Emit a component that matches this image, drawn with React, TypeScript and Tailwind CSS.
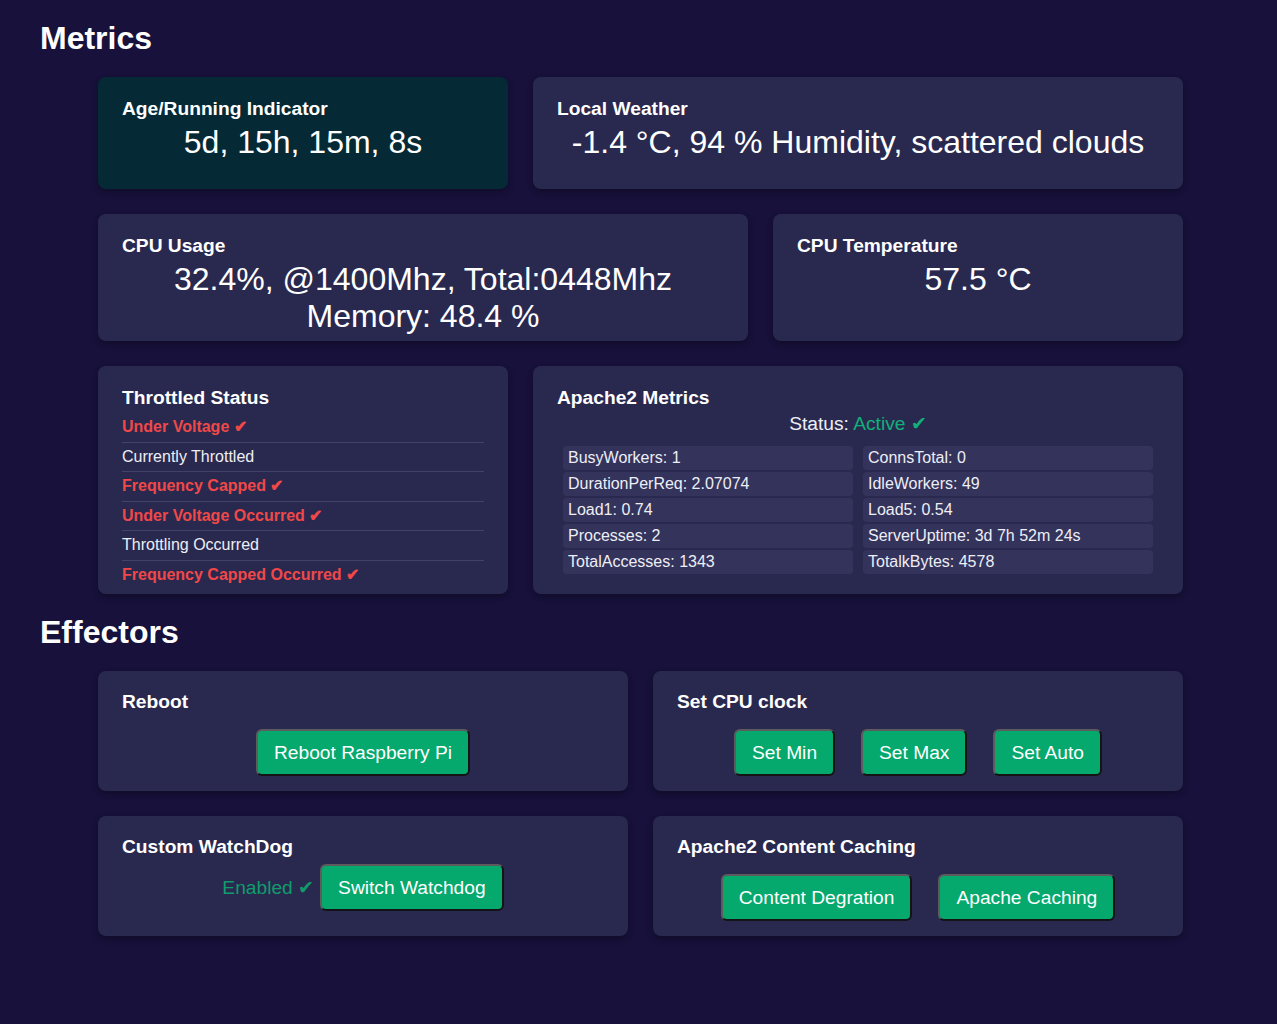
import { ReactNode } from 'react';

const card = 'rounded-lg bg-[#29294f] px-6 shadow-[0_3px_6px_rgba(0,0,0,0.3)]';
const title = 'text-[19.2px] font-bold leading-[22px] text-white mb-[4px]';
const bigValue = 'text-center text-[32px] leading-[37px] text-white';
const btn =
  'rounded-md border-2 border-t-[#5c5c5c] border-l-[#5c5c5c] border-b-[#141414] border-r-[#141414] bg-[#05a86d] px-4 py-[10.5px] text-[19.2px] leading-[22px] text-white';

const throttled = [
  { label: 'Under Voltage', on: true },
  { label: 'Currently Throttled', on: false },
  { label: 'Frequency Capped', on: true },
  { label: 'Under Voltage Occurred', on: true },
  { label: 'Throttling Occurred', on: false },
  { label: 'Frequency Capped Occurred', on: true },
];

const apache = [
  ['BusyWorkers: 1', 'ConnsTotal: 0'],
  ['DurationPerReq: 2.07074', 'IdleWorkers: 49'],
  ['Load1: 0.74', 'Load5: 0.54'],
  ['Processes: 2', 'ServerUptime: 3d 7h 52m 24s'],
  ['TotalAccesses: 1343', 'TotalkBytes: 4578'],
];

function Card({ heading, className, children }: { heading: string; className?: string; children: ReactNode }) {
  return (
    <div className={`${card} ${className ?? ''}`}>
      <h3 className={title}>{heading}</h3>
      {children}
    </div>
  );
}

export default function App() {
  return (
    <div className="min-h-screen bg-[#17113b] pt-5 pb-10 font-['Liberation_Sans',Arial,sans-serif] text-white">
      <h1 className="px-10 text-[32px] font-bold leading-[37px]">Metrics</h1>

      <div className="mt-5 ml-[98px] flex w-[1085px] flex-col gap-[25px]">
        <div className="flex gap-[25px]">
          <Card heading="Age/Running Indicator" className="min-h-[112px] w-[410px] pt-[21px] !bg-[#052a35]">
            <p className={bigValue}>5d, 15h, 15m, 8s</p>
          </Card>
          <Card heading="Local Weather" className="min-h-[112px] w-[650px] pt-[21px]">
            <p className={bigValue}>-1.4 °C, 94 % Humidity, scattered clouds</p>
          </Card>
        </div>

        <div className="flex gap-[25px]">
          <Card heading="CPU Usage" className="w-[650px] pt-[21px] pb-[6px]">
            <p className={bigValue}>32.4%, @1400Mhz, Total:0448Mhz</p>
            <p className={bigValue}>Memory: 48.4 %</p>
          </Card>
          <Card heading="CPU Temperature" className="w-[410px] pt-[21px]">
            <p className={bigValue}>57.5 °C</p>
          </Card>
        </div>

        <div className="flex gap-[25px]">
          <Card heading="Throttled Status" className="w-[410px] pt-[21px]">
            <ul className="mt-[2px]">
              {throttled.map((t, i) => (
                <li
                  key={t.label}
                  className={`py-[5px] text-[16px] leading-[18.6px] ${i < throttled.length - 1 ? 'border-b border-[#41416a]' : ''} ${
                    t.on ? 'font-bold text-[#f04848]' : 'text-[#eeeef5]'
                  }`}
                >
                  {t.label}
                  {t.on && ' ✔'}
                </li>
              ))}
            </ul>
          </Card>
          <Card heading="Apache2 Metrics" className="w-[650px] pt-[21px] pb-5">
            <p className="mt-[4px] text-center text-[19.2px] leading-[22px] text-[#eeeef5]">
              Status: <span className="text-[#10b07a]">Active ✔</span>
            </p>
            <div className="mx-[6px] mt-[11px] grid grid-cols-2 gap-x-[10px] gap-y-[2px]">
              {apache.flat().map((v) => (
                <div key={v} className="h-6 rounded-sm bg-[#33335c] pl-[5px] text-[16px] leading-6 text-[#eeeef5]">
                  {v}
                </div>
              ))}
            </div>
          </Card>
        </div>
      </div>

      <h1 className="mt-5 px-10 text-[32px] font-bold leading-[37px]">Effectors</h1>

      <div className="mt-5 ml-[98px] flex w-[1085px] flex-col gap-[25px]">
        <div className="flex gap-[25px]">
          <Card heading="Reboot" className="w-[530px] pt-5 pb-[15px]">
            <div className="mt-[16px] flex justify-center">
              <button className={btn}>Reboot Raspberry Pi</button>
            </div>
          </Card>
          <Card heading="Set CPU clock" className="w-[530px] pt-5 pb-[15px]">
            <div className="mt-[16px] flex justify-center gap-[26px]">
              <button className={btn}>Set Min</button>
              <button className={btn}>Set Max</button>
              <button className={btn}>Set Auto</button>
            </div>
          </Card>
        </div>

        <div className="flex gap-[25px]">
          <Card heading="Custom WatchDog" className="w-[530px] pt-5 pb-[15px]">
            <div className="mt-[6px] flex items-center justify-center gap-[6px]">
              <span className="text-[19.2px] leading-[22px] text-[#0f9c6c]">Enabled ✔</span>
              <button className={btn}>Switch Watchdog</button>
            </div>
          </Card>
          <Card heading="Apache2 Content Caching" className="w-[530px] pt-5 pb-[15px]">
            <div className="mt-[16px] flex justify-center gap-[26px]">
              <button className={btn}>Content Degration</button>
              <button className={btn}>Apache Caching</button>
            </div>
          </Card>
        </div>
      </div>
    </div>
  );
}
